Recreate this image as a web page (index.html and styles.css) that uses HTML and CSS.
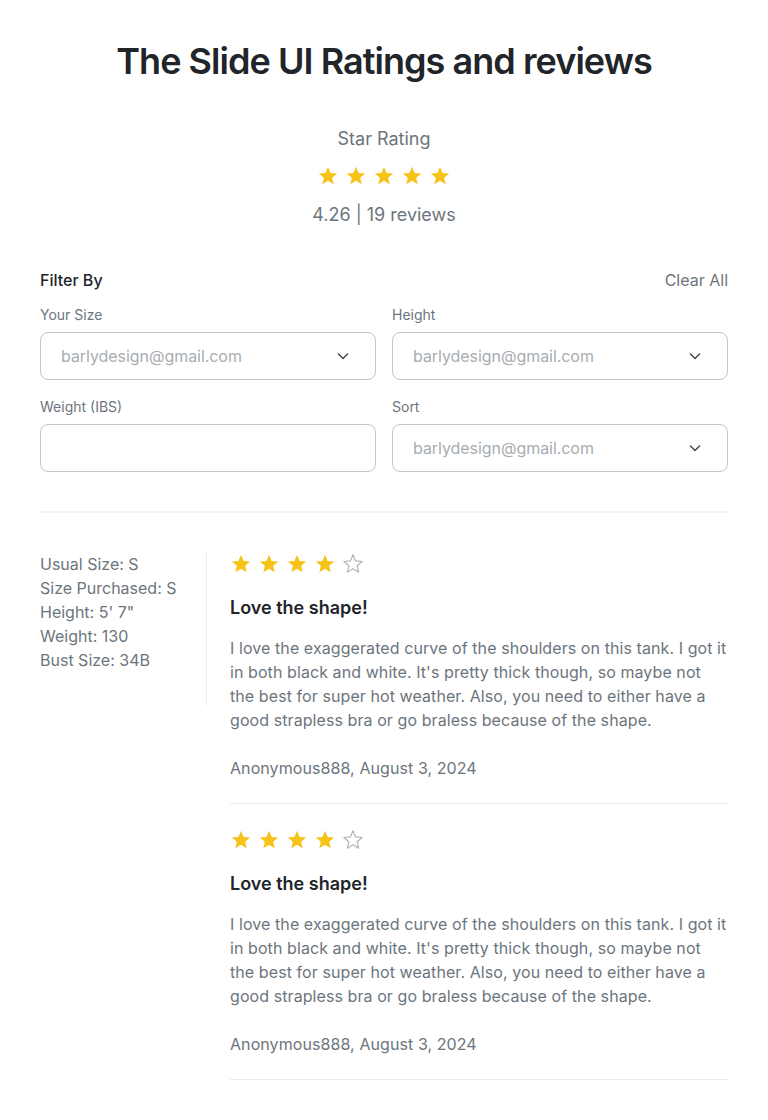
FILE: index.html
```html
<!DOCTYPE html>
<html lang="en">
<head>
<meta charset="utf-8">
<title>The Slide UI Ratings and reviews</title>
<link rel="stylesheet" href="styles.css">
</head>
<body>
<main class="page">
  <h1 class="title">The Slide UI Ratings and reviews</h1>

  <section class="summary">
    <p class="summary-label">Star Rating</p>
    <div class="stars stars-center">
      <svg class="star on" viewBox="0 0 24 24"><path d="M12 17.27L18.18 21l-1.64-7.03L22 9.24l-7.19-.61L12 2 9.19 8.63 2 9.24l5.46 4.73L5.82 21z"/></svg>
      <svg class="star on" viewBox="0 0 24 24"><path d="M12 17.27L18.18 21l-1.64-7.03L22 9.24l-7.19-.61L12 2 9.19 8.63 2 9.24l5.46 4.73L5.82 21z"/></svg>
      <svg class="star on" viewBox="0 0 24 24"><path d="M12 17.27L18.18 21l-1.64-7.03L22 9.24l-7.19-.61L12 2 9.19 8.63 2 9.24l5.46 4.73L5.82 21z"/></svg>
      <svg class="star on" viewBox="0 0 24 24"><path d="M12 17.27L18.18 21l-1.64-7.03L22 9.24l-7.19-.61L12 2 9.19 8.63 2 9.24l5.46 4.73L5.82 21z"/></svg>
      <svg class="star on" viewBox="0 0 24 24"><path d="M12 17.27L18.18 21l-1.64-7.03L22 9.24l-7.19-.61L12 2 9.19 8.63 2 9.24l5.46 4.73L5.82 21z"/></svg>
    </div>
    <p class="summary-score">4.26 <span class="sep">|</span> 19 reviews</p>
  </section>

  <section class="filters">
    <div class="filters-head">
      <span class="filters-title">Filter By</span>
      <span class="filters-clear">Clear All</span>
    </div>
    <div class="filters-grid">
      <div class="field">
        <label class="field-label">Your Size</label>
        <div class="control">
          <span class="placeholder">barlydesign@gmail.com</span>
          <svg class="chev" viewBox="0 0 16 16"><path d="M3.5 6l4.5 4.5L12.5 6"/></svg>
        </div>
      </div>
      <div class="field">
        <label class="field-label">Height</label>
        <div class="control">
          <span class="placeholder">barlydesign@gmail.com</span>
          <svg class="chev" viewBox="0 0 16 16"><path d="M3.5 6l4.5 4.5L12.5 6"/></svg>
        </div>
      </div>
      <div class="field">
        <label class="field-label">Weight (IBS)</label>
        <div class="control"></div>
      </div>
      <div class="field">
        <label class="field-label">Sort</label>
        <div class="control">
          <span class="placeholder">barlydesign@gmail.com</span>
          <svg class="chev" viewBox="0 0 16 16"><path d="M3.5 6l4.5 4.5L12.5 6"/></svg>
        </div>
      </div>
    </div>
  </section>

  <hr class="divider">

  <section class="reviews">
    <aside class="profile">
      <p>Usual Size: S</p>
      <p>Size Purchased: S</p>
      <p>Height: 5' 7"</p>
      <p>Weight: 130</p>
      <p>Bust Size: 34B</p>
    </aside>
    <div class="review-list">
      <article class="review">
        <div class="stars">
          <svg class="star on" viewBox="0 0 24 24"><path d="M12 17.27L18.18 21l-1.64-7.03L22 9.24l-7.19-.61L12 2 9.19 8.63 2 9.24l5.46 4.73L5.82 21z"/></svg>
          <svg class="star on" viewBox="0 0 24 24"><path d="M12 17.27L18.18 21l-1.64-7.03L22 9.24l-7.19-.61L12 2 9.19 8.63 2 9.24l5.46 4.73L5.82 21z"/></svg>
          <svg class="star on" viewBox="0 0 24 24"><path d="M12 17.27L18.18 21l-1.64-7.03L22 9.24l-7.19-.61L12 2 9.19 8.63 2 9.24l5.46 4.73L5.82 21z"/></svg>
          <svg class="star on" viewBox="0 0 24 24"><path d="M12 17.27L18.18 21l-1.64-7.03L22 9.24l-7.19-.61L12 2 9.19 8.63 2 9.24l5.46 4.73L5.82 21z"/></svg>
          <svg class="star off" viewBox="0 0 24 24"><path d="M12 17.27L18.18 21l-1.64-7.03L22 9.24l-7.19-.61L12 2 9.19 8.63 2 9.24l5.46 4.73L5.82 21z"/></svg>
        </div>
        <h3 class="review-title">Love the shape!</h3>
        <p class="review-body">I love the exaggerated curve of the shoulders on this tank. I got it in both black and white. It's pretty thick though, so maybe not the best for super hot weather. Also, you need to either have a good strapless bra or go braless because of the shape.</p>
        <p class="review-author">Anonymous888, August 3, 2024</p>
      </article>
      <article class="review">
        <div class="stars">
          <svg class="star on" viewBox="0 0 24 24"><path d="M12 17.27L18.18 21l-1.64-7.03L22 9.24l-7.19-.61L12 2 9.19 8.63 2 9.24l5.46 4.73L5.82 21z"/></svg>
          <svg class="star on" viewBox="0 0 24 24"><path d="M12 17.27L18.18 21l-1.64-7.03L22 9.24l-7.19-.61L12 2 9.19 8.63 2 9.24l5.46 4.73L5.82 21z"/></svg>
          <svg class="star on" viewBox="0 0 24 24"><path d="M12 17.27L18.18 21l-1.64-7.03L22 9.24l-7.19-.61L12 2 9.19 8.63 2 9.24l5.46 4.73L5.82 21z"/></svg>
          <svg class="star on" viewBox="0 0 24 24"><path d="M12 17.27L18.18 21l-1.64-7.03L22 9.24l-7.19-.61L12 2 9.19 8.63 2 9.24l5.46 4.73L5.82 21z"/></svg>
          <svg class="star off" viewBox="0 0 24 24"><path d="M12 17.27L18.18 21l-1.64-7.03L22 9.24l-7.19-.61L12 2 9.19 8.63 2 9.24l5.46 4.73L5.82 21z"/></svg>
        </div>
        <h3 class="review-title">Love the shape!</h3>
        <p class="review-body">I love the exaggerated curve of the shoulders on this tank. I got it in both black and white. It's pretty thick though, so maybe not the best for super hot weather. Also, you need to either have a good strapless bra or go braless because of the shape.</p>
        <p class="review-author">Anonymous888, August 3, 2024</p>
      </article>
    </div>
  </section>
</main>
</body>
</html>
```

FILE: styles.css
```css
* { box-sizing: border-box; }

html, body {
  margin: 0;
  padding: 0;
  background: #ffffff;
}

body {
  font-family: Inter, "Noto Sans", "Liberation Sans", sans-serif;
  color: #212529;
}

p, h1, h3 { margin: 0; }

.page {
  padding: 40px 40px 0;
}

.title {
  font-size: 36px;
  font-weight: 600;
  line-height: 43px;
  text-align: center;
  letter-spacing: -0.95px;
  color: #212529;
}

.summary {
  margin-top: 42px;
  display: flex;
  flex-direction: column;
  align-items: center;
}

.summary-label,
.summary-score {
  font-size: 18px;
  line-height: 27px;
  color: #6c757d;
}

.sep { color: #6c757d; }

.stars {
  display: flex;
  gap: 6px;
  height: 24px;
  align-items: center;
}

.stars-center {
  margin: 12px 0 13px;
}

.star {
  width: 22px;
  height: 22px;
  display: block;
}

.star.on path { fill: #f7c21a; }

.star.off path {
  fill: none;
  stroke: #adb5bd;
  stroke-width: 1.3;
  stroke-linejoin: round;
}

.filters {
  margin-top: 40px;
}

.filters-head {
  display: flex;
  justify-content: space-between;
  align-items: center;
  font-size: 16px;
  line-height: 24px;
}

.filters-title {
  font-weight: 500;
  color: #212529;
}

.filters-clear {
  color: #6c757d;
}

.filters-grid {
  margin-top: 12px;
  display: grid;
  grid-template-columns: 1fr 1fr;
  column-gap: 16px;
  row-gap: 16px;
}

.field {
  display: flex;
  flex-direction: column;
}

.field-label {
  font-size: 14px;
  line-height: 21px;
  color: #6c757d;
  margin-bottom: 7px;
}

.control {
  height: 48px;
  border: 1px solid #c3c7cb;
  border-radius: 8px;
  display: flex;
  align-items: center;
  justify-content: space-between;
  padding: 0 24px 0 20px;
}

.placeholder {
  font-size: 16px;
  letter-spacing: -0.05px;
  color: #a7adb3;
}

.chev {
  width: 16px;
  height: 16px;
}

.chev path {
  fill: none;
  stroke: #495057;
  stroke-width: 1.6;
  stroke-linecap: round;
  stroke-linejoin: round;
}

.divider {
  margin: 39px 0 39px;
  border: 0;
  border-top: 2px solid #f1f3f5;
}

.reviews {
  display: flex;
  align-items: flex-start;
}

.profile {
  flex: 0 0 167px;
  border-right: 1px solid #eceef0;
  padding-bottom: 34px;
  font-size: 16px;
  line-height: 24px;
  color: #6c757d;
}

.review-list {
  flex: 1;
  margin-left: 23px;
}

.review {
  border-bottom: 1px solid #e9ecef;
  padding-bottom: 23px;
}

.review + .review {
  padding-top: 24px;
}

.review-title {
  margin-top: 18px;
  font-size: 18px;
  line-height: 27px;
  font-weight: 600;
  color: #212529;
}

.review-body {
  margin-top: 15px;
  font-size: 16px;
  line-height: 24px;
  letter-spacing: 0.08px;
  color: #6c757d;
}

.review-author {
  margin-top: 24px;
  font-size: 16px;
  line-height: 24px;
  letter-spacing: 0.08px;
  color: #6c757d;
}
```
